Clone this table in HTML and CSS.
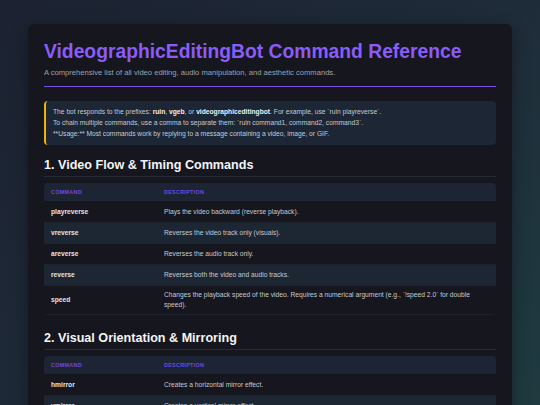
FILE: index.html
```html
<!DOCTYPE html>
<html lang="en">
<head>
<meta charset="utf-8">
<title>VideographicEditingBot Command Reference</title>
<link rel="stylesheet" href="styles.css">
</head>
<body>
<main class="card">
  <header class="page-head">
    <h1 class="title">VideographicEditingBot Command Reference</h1>
    <p class="subtitle">A comprehensive list of all video editing, audio manipulation, and aesthetic commands.</p>
  </header>

  <div class="info">
    <p>The bot responds to the prefixes: <b>ruin</b>, <b>vgeb</b>, or <b>videographiceditingbot</b>. For example, use `ruin playreverse`.</p>
    <p>To chain multiple commands, use a comma to separate them: `ruin command1, command2, command3`.</p>
    <p>**Usage:** Most commands work by replying to a message containing a video, image, or GIF.</p>
  </div>

  <section class="section">
    <h2 class="section-title">1. Video Flow &amp; Timing Commands</h2>
    <table class="cmd-table">
      <thead>
        <tr><th class="col-cmd">Command</th><th>Description</th></tr>
      </thead>
      <tbody>
        <tr><td class="cmd">playreverse</td><td>Plays the video backward (reverse playback).</td></tr>
        <tr><td class="cmd">vreverse</td><td>Reverses the video track only (visuals).</td></tr>
        <tr><td class="cmd">areverse</td><td>Reverses the audio track only.</td></tr>
        <tr><td class="cmd">reverse</td><td>Reverses both the video and audio tracks.</td></tr>
        <tr><td class="cmd">speed</td><td>Changes the playback speed of the video. Requires a numerical argument (e.g., `!speed 2.0` for double speed).</td></tr>
      </tbody>
    </table>
  </section>

  <section class="section">
    <h2 class="section-title">2. Visual Orientation &amp; Mirroring</h2>
    <table class="cmd-table">
      <thead>
        <tr><th class="col-cmd">Command</th><th>Description</th></tr>
      </thead>
      <tbody>
        <tr><td class="cmd">hmirror</td><td>Creates a horizontal mirror effect.</td></tr>
        <tr><td class="cmd">vmirror</td><td>Creates a vertical mirror effect.</td></tr>
        <tr><td class="cmd">hflip</td><td>Flips the video horizontally.</td></tr>
      </tbody>
    </table>
  </section>
</main>
</body>
</html>
```

FILE: styles.css
```css
* { box-sizing: border-box; }

html, body {
  height: 100%;
}

body {
  margin: 0;
  padding: 24px 28px 0;
  background: linear-gradient(135deg, #1c2231 0%, #1e2a38 50%, #1f3a40 100%);
  font-family: "Liberation Sans", Arial, sans-serif;
  color: #c4cad3;
  overflow: hidden;
}

.card {
  background: #15161e;
  border-radius: 6px;
  padding: 14px 16px 16px;
  min-height: 420px;
  box-shadow: 0 4px 16px rgba(0, 0, 0, 0.35);
}

.page-head {
  border-bottom: 1px solid #7c4fe0;
  padding-bottom: 8px;
}

.title {
  margin: 0;
  font-size: 19.3px;
  line-height: 28px;
  font-weight: 700;
  color: #8b5cf6;
  white-space: nowrap;
}

.subtitle {
  margin: 1px 0 0;
  font-size: 7.6px;
  line-height: 11px;
  color: #9ca3af;
}

.info {
  margin-top: 14px;
  background: #1d2634;
  border-left: 2px solid #eab308;
  border-radius: 4px;
  padding: 5px 7px 6px;
  font-size: 6.7px;
  line-height: 11px;
  color: #c4cad3;
}

.info p { margin: 0; }
.info b { color: #eef0f3; }

.section {
  margin-top: 10px;
}

.section + .section {
  margin-top: 13px;
}

.section-title {
  margin: 0 0 6px;
  font-size: 12.6px;
  line-height: 20px;
  font-weight: 700;
  color: #f3f4f6;
  border-bottom: 1px solid #262b36;
  padding-bottom: 1px;
}

.cmd-table {
  width: 100%;
  border-collapse: separate;
  border-spacing: 0;
  border-radius: 4px;
  overflow: hidden;
  font-size: 6.7px;
  line-height: 10px;
}

.cmd-table th {
  background: #1d2433;
  color: #7448d8;
  text-transform: uppercase;
  text-align: left;
  font-size: 5.4px;
  letter-spacing: 0.3px;
  font-weight: 700;
  padding: 4px 7px;
  height: 19px;
  border-bottom: 1px solid #15161e;
}

.col-cmd { width: 25%; }

.cmd-table td {
  padding: 4px 7px;
  height: 21px;
  color: #c4cad3;
  vertical-align: middle;
  border-bottom: 1px solid #1e222c;
}

.cmd-table tbody tr:nth-child(even) td {
  background: #1d2633;
}

.cmd-table td.cmd {
  color: #e2e5ea;
  font-weight: 700;
}
```
